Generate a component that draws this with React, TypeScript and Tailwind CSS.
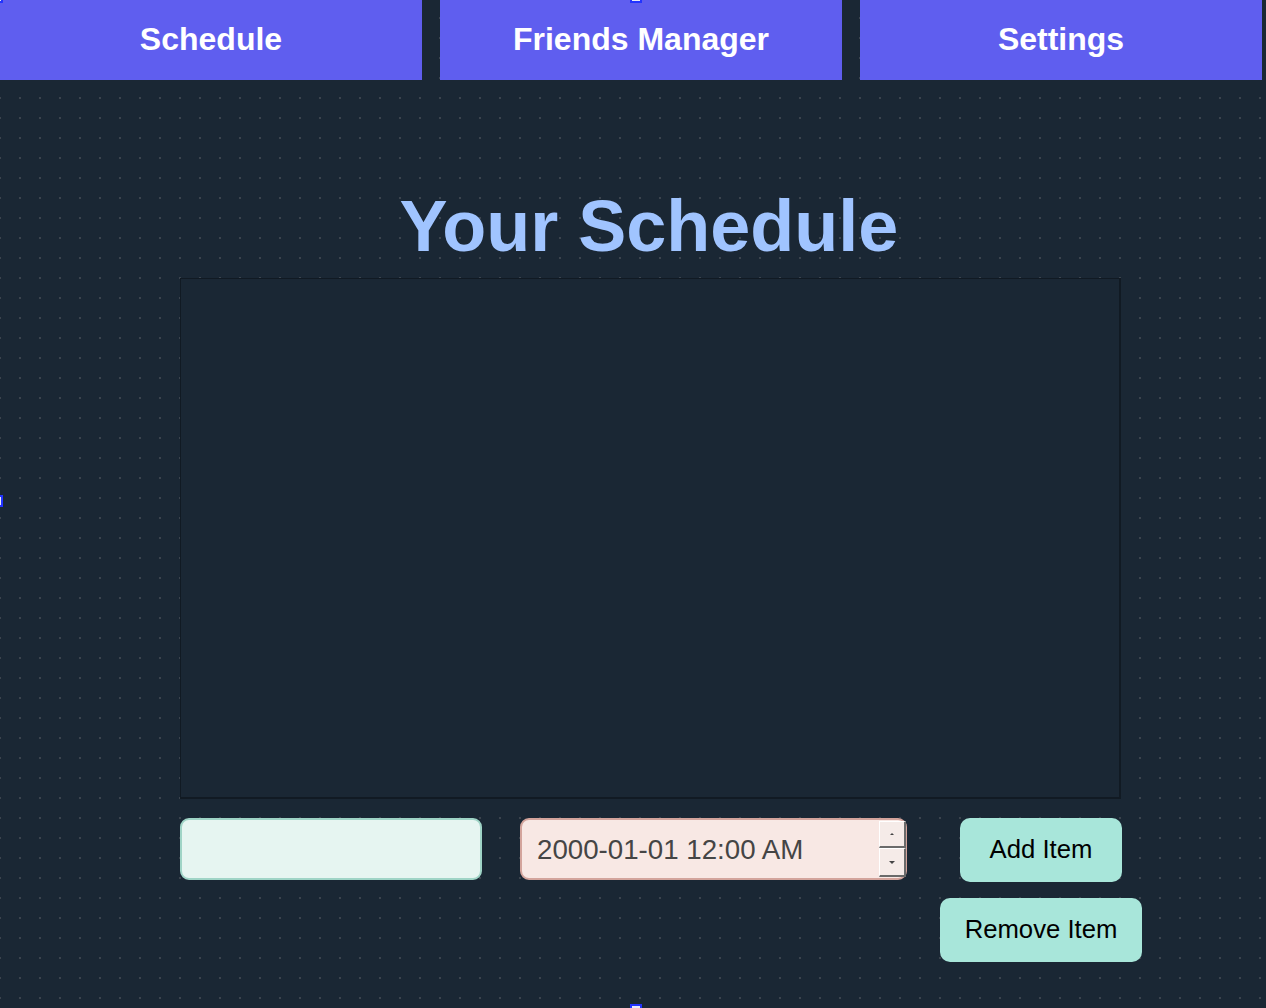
import React from "react";

const font = { fontFamily: '"Liberation Sans", Arial, Helvetica, sans-serif' };

function NavButton({ label, w }: { label: string; w: string }) {
  return (
    <div
      className={`${w} h-[80px] bg-[#5f5eef] flex items-center justify-center pb-[2px] text-white font-bold text-[32px] leading-none`}
    >
      {label}
    </div>
  );
}

function Handle({ cls }: { cls: string }) {
  return <div className={`absolute ${cls} w-[12px] h-[12px] border-2 border-[#2233ff] bg-[#e8eaf8]`} />;
}

export default function App() {
  return (
    <div
      style={font}
      className="relative w-[1266px] h-[1008px] overflow-hidden bg-[#1a2734] bg-[radial-gradient(circle_at_1px_1px,#3b434d_1px,transparent_0)] bg-[length:20px_20px] bg-[position:19px_17px]"
    >
      <div className="flex gap-[18px]">
        <NavButton label="Schedule" w="w-[422px]" />
        <NavButton label="Friends Manager" w="w-[402px]" />
        <NavButton label="Settings" w="w-[402px]" />
      </div>

      <h1 className="mt-[110px] text-center text-[72px] leading-none font-bold text-[#a0c4ff] pl-[32px]">
        Your Schedule
      </h1>

      <div className="ml-[180px] mt-[16px] w-[941px] h-[521px] bg-[#1a2734] border-2 border-[#111a23] border-l-[1px] border-t-[1px]" />

      <div className="flex ml-[180px] mt-[19px] items-start">
        <div className="w-[302px] h-[62px] rounded-[9px] bg-[#e6f5f1] border-2 border-[#9fd4c6]" />
        <div className="relative ml-[38px] w-[387px] h-[62px] rounded-[9px] bg-[#f8e8e4] border-2 border-[#d3a49c] flex items-center pl-[15px]">
          <span className="text-[27.7px] text-[#454545] leading-none pt-[1px]">2000-01-01 12:00 AM</span>
          <div className="absolute right-[-1px] top-[1px] w-[27px] flex flex-col">
            <div className="h-[27px] bg-[#f5ebe8] border-t border-l border-white border-r-2 border-b-2 border-r-[#6a6a6a] border-b-[#6a6a6a] flex items-center justify-center">
              <div className="w-0 h-0 border-l-[2px] border-r-[2px] border-b-[2px] border-l-transparent border-r-transparent border-b-[#444]" />
            </div>
            <div className="h-[29px] bg-[#f5ebe8] border-t border-l border-white border-r-2 border-b-2 border-r-[#6a6a6a] border-b-[#6a6a6a] flex items-center justify-center">
              <div className="w-0 h-0 border-l-[3px] border-r-[3px] border-t-[3px] border-l-transparent border-r-transparent border-t-[#444]" />
            </div>
          </div>
        </div>
        <div className="ml-[33px] w-[202px] flex flex-col items-center gap-[16px]">
          <div className="w-[162px] h-[64px] rounded-[10px] bg-[#a8e6da] flex items-center justify-center text-[25.7px] text-black leading-none">
            Add Item
          </div>
          <div className="w-[202px] h-[64px] rounded-[10px] bg-[#a8e6da] flex items-center justify-center text-[25.7px] text-black leading-none">
            Remove Item
          </div>
        </div>
      </div>

      <Handle cls="left-[-9px] top-[-9px]" />
      <Handle cls="left-[630px] top-[-9px]" />
      <Handle cls="left-[-9px] top-[495px]" />
      <Handle cls="left-[630px] top-[1004px]" />
    </div>
  );
}
